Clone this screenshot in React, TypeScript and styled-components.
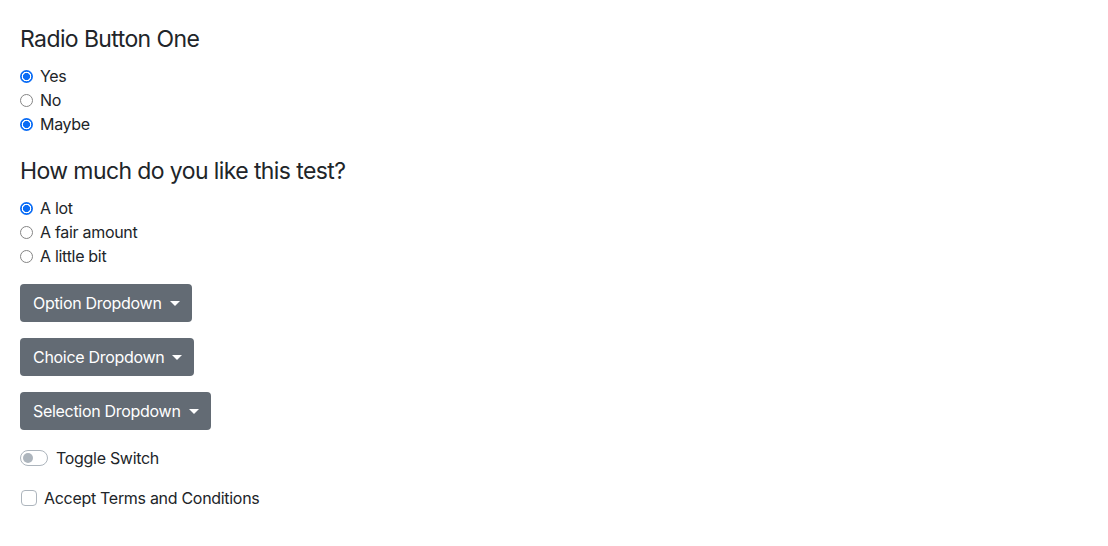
import React, { useState } from 'react';
import styled, { createGlobalStyle } from 'styled-components';

const GlobalStyle = createGlobalStyle`
  * { box-sizing: border-box; }
  body {
    margin: 0;
    background: #ffffff;
    color: #212529;
    font-family: Inter, "Noto Sans", "Liberation Sans", sans-serif;
    font-size: 16px;
    line-height: 1.5;
    letter-spacing: -0.3px;
  }
`;

const Page = styled.div`
  padding: 25px 20px 20px;
`;

const Heading = styled.h4`
  margin: 0 0 10px;
  font-size: 23px;
  font-weight: 400;
  line-height: 29px;
  letter-spacing: -0.6px;
`;

const Group = styled.div<{ $after: number }>`
  margin-bottom: ${p => p.$after}px;
`;

const RadioRow = styled.label`
  display: flex;
  align-items: center;
  height: 24px;
  gap: 7px;
  cursor: pointer;
`;

const RadioDot = styled.span<{ $checked: boolean }>`
  width: 13px;
  height: 13px;
  border-radius: 50%;
  flex: 0 0 auto;
  border: ${p => (p.$checked ? 'none' : '1px solid #858585')};
  background: ${p =>
    p.$checked
      ? 'radial-gradient(circle, #0a6cf5 0 3.3px, #ffffff 3.8px 4.6px, #0a6cf5 5.1px)'
      : '#ffffff'};
`;

const DropButton = styled.button`
  display: inline-flex;
  align-items: center;
  height: 38px;
  padding: 0 12px 0 13px;
  margin-bottom: 16px;
  border: none;
  border-radius: 4px;
  background: #636b74;
  color: #ffffff;
  font-family: inherit;
  font-size: 16px;
  letter-spacing: -0.3px;
  cursor: pointer;

  &::after {
    content: '';
    margin-left: 8px;
    border-top: 5px solid #ffffff;
    border-left: 5px solid transparent;
    border-right: 5px solid transparent;
  }
`;

const Stack = styled.div`
  display: flex;
  flex-direction: column;
  align-items: flex-start;
`;

const SwitchRow = styled.label`
  display: flex;
  align-items: center;
  height: 24px;
  gap: 8px;
  margin-bottom: 16px;
  cursor: pointer;
`;

const SwitchTrack = styled.span<{ $on: boolean }>`
  position: relative;
  width: 28px;
  height: 16px;
  border-radius: 8px;
  border: 1px solid ${p => (p.$on ? '#0a6cf5' : '#adb5bd')};
  background: ${p => (p.$on ? '#0a6cf5' : '#ffffff')};

  &::after {
    content: '';
    position: absolute;
    top: 2px;
    left: ${p => (p.$on ? '14px' : '2px')};
    width: 10px;
    height: 10px;
    border-radius: 50%;
    background: ${p => (p.$on ? '#ffffff' : '#adb5bd')};
  }
`;

const CheckRow = styled.label`
  display: flex;
  align-items: center;
  height: 24px;
  gap: 7px;
  padding-left: 1px;
  cursor: pointer;
`;

const CheckBox = styled.span<{ $on: boolean }>`
  width: 16px;
  height: 16px;
  border-radius: 4px;
  border: 1px solid ${p => (p.$on ? '#0a6cf5' : '#adb5bd')};
  background: ${p => (p.$on ? '#0a6cf5' : '#ffffff')};
`;

const RadioList: React.FC<{ options: string[]; checked: string[]; after: number }> = ({
  options,
  checked,
  after,
}) => {
  const [sel, setSel] = useState<string[]>(checked);
  return (
    <Group $after={after}>
      {options.map(o => (
        <RadioRow key={o} onClick={() => setSel([o])}>
          <RadioDot $checked={sel.includes(o)} />
          {o}
        </RadioRow>
      ))}
    </Group>
  );
};

export default function App() {
  const [on, setOn] = useState(false);
  const [accept, setAccept] = useState(false);

  return (
    <Page>
      <GlobalStyle />
      <Heading>Radio Button One</Heading>
      <RadioList options={['Yes', 'No', 'Maybe']} checked={['Yes', 'Maybe']} after={21} />

      <Heading>How much do you like this test?</Heading>
      <RadioList options={['A lot', 'A fair amount', 'A little bit']} checked={['A lot']} after={16} />

      <Stack>
        <DropButton>Option Dropdown</DropButton>
        <DropButton>Choice Dropdown</DropButton>
        <DropButton>Selection Dropdown</DropButton>
      </Stack>

      <SwitchRow onClick={() => setOn(!on)}>
        <SwitchTrack $on={on} />
        Toggle Switch
      </SwitchRow>

      <CheckRow onClick={() => setAccept(!accept)}>
        <CheckBox $on={accept} />
        Accept Terms and Conditions
      </CheckRow>
    </Page>
  );
}
